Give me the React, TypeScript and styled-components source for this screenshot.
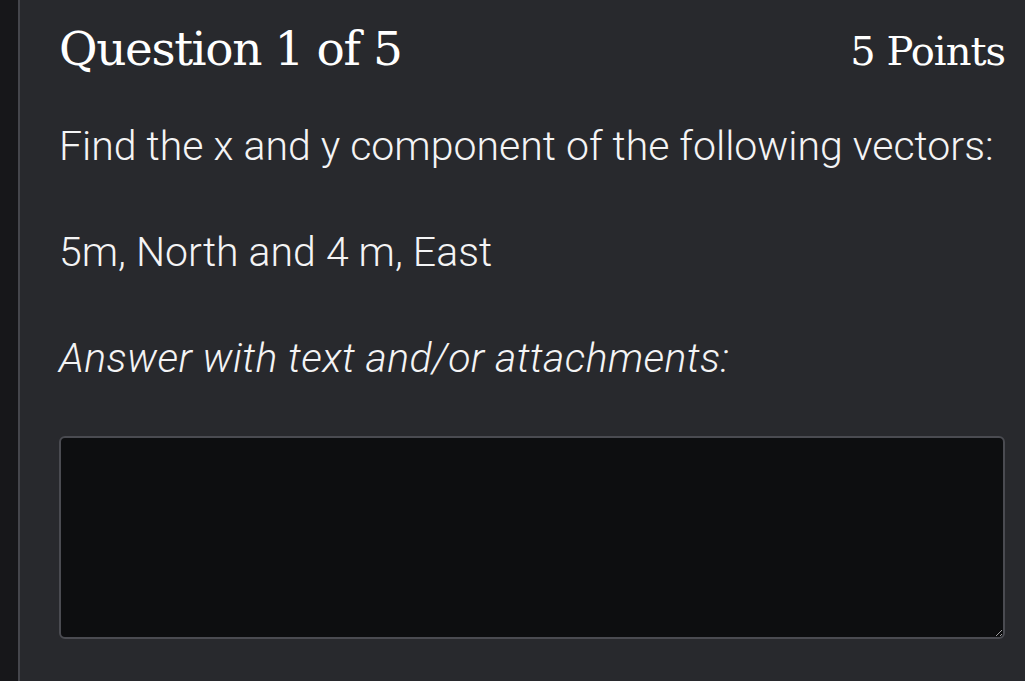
import React from 'react';
import styled, { createGlobalStyle } from 'styled-components';

const Global = createGlobalStyle`
  html, body { margin: 0; padding: 0; background: #28292d; }
  #root { height: 100vh; }
`;

const Page = styled.div`
  display: flex;
  height: 681px;
  width: 1025px;
  overflow: hidden;
  background: #28292d;
`;

const Rail = styled.div`
  width: 18px;
  flex-shrink: 0;
  background: #17171a;
  border-right: 2px solid #45464c;
`;

const Card = styled.main`
  flex: 1;
  padding: 18px 20px 0 39px;
  color: #f4f4f5;
  font-family: Roboto, "Liberation Sans", sans-serif;
`;

const Header = styled.header`
  display: flex;
  justify-content: space-between;
  align-items: baseline;
  font-family: "DejaVu Serif", "Liberation Serif", serif;
  color: #ffffff;
`;

const Title = styled.h1`
  margin: 0;
  font-size: 47px;
  font-weight: 400;
  line-height: 62px;
  letter-spacing: -1.4px;
`;

const Points = styled.span`
  font-size: 40px;
  letter-spacing: -1px;
`;

const Text = styled.p<{ $italic?: boolean }>`
  margin: 0;
  font-size: 41px;
  font-weight: 300;
  line-height: 46px;
  font-style: ${({ $italic }) => ($italic ? 'italic' : 'normal')};
  letter-spacing: ${({ $italic }) => ($italic ? '0.4px' : 'normal')};
`;

const Prompt = styled(Text)`
  margin-top: 43px;
`;

const Vectors = styled(Text)`
  margin-top: 60px;
`;

const AnswerLabel = styled(Text)`
  margin-top: 60px;
`;

const Answer = styled.textarea`
  display: block;
  box-sizing: border-box;
  margin-top: 55px;
  width: 946px;
  height: 203px;
  background: #0d0e10;
  border: 2px solid #4a4b51;
  border-radius: 6px;
  color: #f4f4f5;
  font: inherit;
  outline: none;
`;

export default function App() {
  return (
    <Page>
      <Global />
      <Rail />
      <Card>
        <Header>
          <Title>Question 1 of 5</Title>
          <Points>5 Points</Points>
        </Header>
        <Prompt>Find the x and y component of the following vectors:</Prompt>
        <Vectors>5m, North and 4 m, East</Vectors>
        <AnswerLabel $italic>Answer with text and/or attachments:</AnswerLabel>
        <Answer />
      </Card>
    </Page>
  );
}
